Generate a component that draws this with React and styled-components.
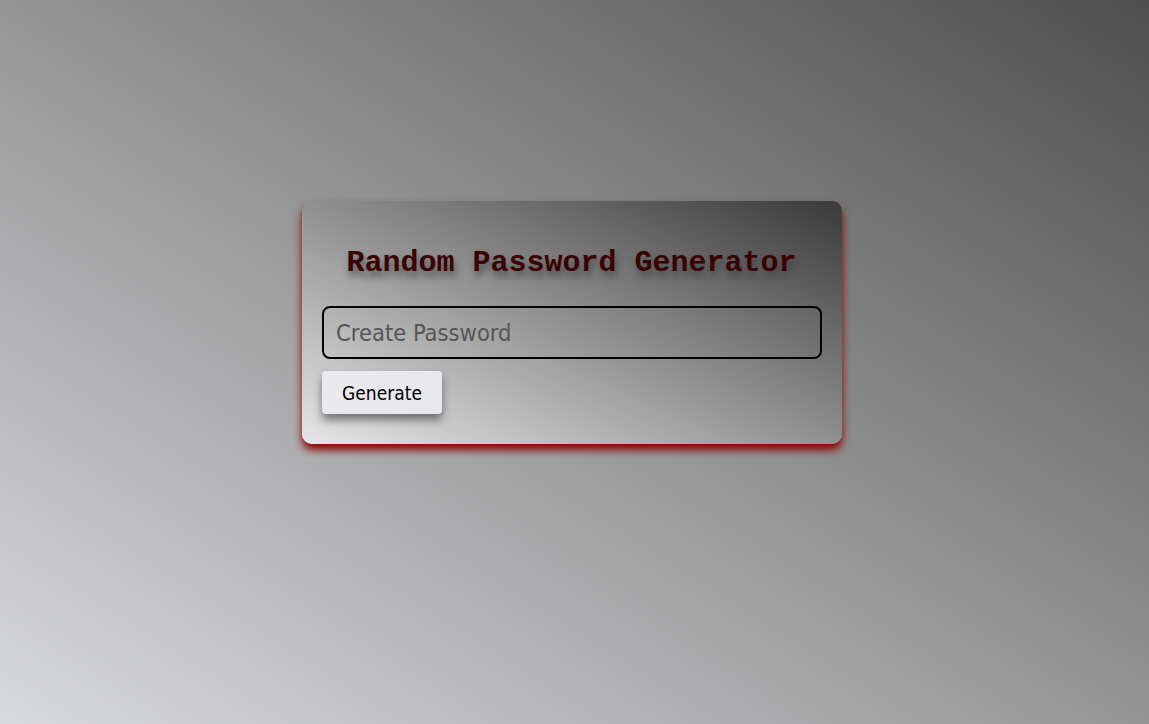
import React from "react";
import styled, { createGlobalStyle } from "styled-components";

const Global = createGlobalStyle`
  html, body { margin: 0; padding: 0; height: 100%; }
  body {
    background: linear-gradient(to top right, #d9dadc, #4f4f4f);
    font-family: "DejaVu Sans Condensed", "DejaVu Sans", sans-serif;
  }
  #root { min-height: 100vh; }
`;

const Page = styled.main`
  min-height: 724px;
  display: flex;
  justify-content: center;
  align-items: flex-start;
  padding: 201px 5px 0 0;
  box-sizing: border-box;
`;

const Card = styled.section`
  width: 540px;
  box-sizing: border-box;
  padding: 20px 21px 30px 20px;
  border-radius: 10px;
  background: linear-gradient(to top right, #e6e6e8, #3a3a3a);
  box-shadow: 0 6px 9px #8b0000;
  display: flex;
  flex-direction: column;
  align-items: flex-start;
`;

const Title = styled.h1`
  align-self: stretch;
  margin: 26px 0 27px;
  text-align: center;
  font-family: "Liberation Mono", "Courier New", monospace;
  font-weight: bold;
  font-size: 30px;
  line-height: 32px;
  color: #3a0202;
  text-shadow: 2px 6px 7px rgba(60, 60, 60, 0.7);
`;

const Input = styled.input`
  width: 500px;
  height: 53px;
  box-sizing: border-box;
  border: 2px solid #000;
  border-radius: 8px;
  background: transparent;
  padding: 0 12px;
  font-family: "DejaVu Sans Condensed", "DejaVu Sans", sans-serif;
  font-size: 23.5px;
  color: #222;
  outline: none;
  &::placeholder { color: #555; }
`;

const Button = styled.button`
  margin-top: 12px;
  width: 120px;
  height: 43px;
  border: none;
  border-radius: 4px;
  background: #e9e9ed;
  color: #000;
  font-family: "DejaVu Sans Condensed", "DejaVu Sans", sans-serif;
  font-size: 19px;
  box-shadow: 0 6px 8px rgba(40, 40, 40, 0.55);
  cursor: pointer;
`;

export default function App() {
  return (
    <>
      <Global />
      <Page>
        <Card>
          <Title>Random Password Generator</Title>
          <Input placeholder="Create Password" />
          <Button>Generate</Button>
        </Card>
      </Page>
    </>
  );
}
